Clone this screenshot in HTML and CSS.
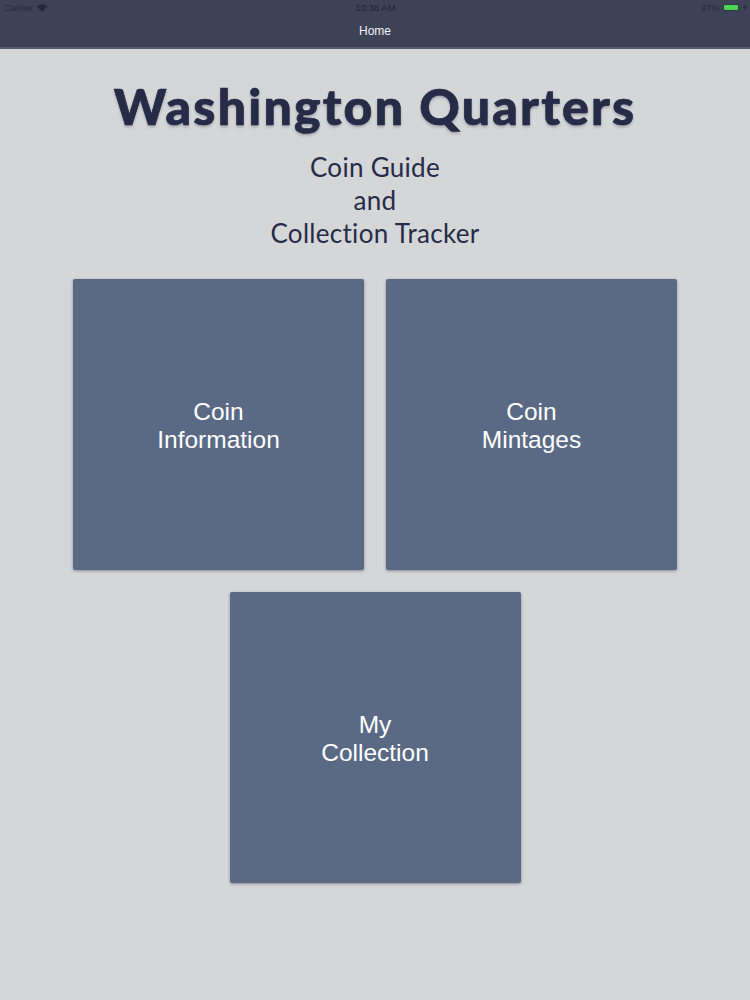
FILE: index.html
```html
<!DOCTYPE html>
<html lang="en">
<head>
    <meta charset="UTF-8">
    <meta name="viewport" content="width=device-width, initial-scale=1.0">
    <title>Washington Quarters</title>
    <link rel="stylesheet" href="styles.css">
</head>
<body>
    <header class="topbar">
        <div class="status">
            <div class="status-left">
                <span>Carrier</span>
                <svg class="wifi" width="10" height="8" viewBox="0 0 10 8"><path d="M5 8 L0 2.6 C3 -0.6 7 -0.6 10 2.6 Z" fill="#24283d"/></svg>
            </div>
            <div class="status-time">10:38 AM</div>
            <div class="status-right">
                <span>97%</span>
                <span class="battery"><span class="battery-fill"></span></span>
                <svg class="bolt" width="4" height="7" viewBox="0 0 4 7"><path d="M2.4 0 L0 4 H1.6 L1.2 7 L4 2.8 H2.3 Z" fill="#24283d"/></svg>
            </div>
        </div>
        <div class="nav-title">Home</div>
    </header>

    <main class="home">
        <h1 class="title">Washington Quarters</h1>
        <p class="subtitle">Coin Guide<br>and<br>Collection Tracker</p>
        <div class="tiles">
            <a class="tile">Coin<br>Information</a>
            <a class="tile">Coin<br>Mintages</a>
            <a class="tile">My<br>Collection</a>
        </div>
    </main>
</body>
</html>
```

FILE: styles.css
```css
* { box-sizing: border-box; }
html, body { height: 100%; }
body { margin: 0; background: #d5d6d8; font-family: "Liberation Sans", Arial, sans-serif; }

.topbar { height: 49px; background: #3e4257; border-bottom: 2px solid #555a75; }
.status { display: grid; grid-template-columns: 1fr auto 1fr; align-items: center; height: 15px; padding: 0 3px 0 4px; font-size: 9.5px; color: #24283d; }
.status-left { display: flex; align-items: center; gap: 4px; }
.status-time { color: #1f2336; }
.status-right { display: flex; align-items: center; justify-content: flex-end; gap: 3px; }
.battery { display: block; width: 16px; height: 7px; margin-right: 1px; padding: 1px; border-radius: 2px; background: #2f3d3a; }
.battery-fill { display: block; width: 100%; height: 100%; border-radius: 1px; background: #4fd45a; }
.nav-title { margin-top: 8px; text-align: center; font-size: 12px; line-height: 16px; color: #f2f3f6; }

.home { display: flex; flex-direction: column; align-items: center; }
.title { margin: 27px 0 0; font-family: "Lato", sans-serif; font-size: 50px; font-weight: 900; line-height: 60px; letter-spacing: 2.2px; color: #262b47; -webkit-text-stroke: 0.7px #262b47; text-shadow: 0 2px 3px rgba(30, 34, 60, 0.3); white-space: nowrap; }
.subtitle { margin: 15px 0 0; font-family: "Lato", sans-serif; font-size: 26px; line-height: 33px; letter-spacing: 0.3px; text-align: center; color: #262b47; }

.tiles { display: flex; flex-wrap: wrap; justify-content: center; gap: 22px; width: 604px; margin-top: 29px; }
.tile { display: flex; align-items: center; justify-content: center; width: 291px; height: 291px; padding-top: 3px; border-radius: 2px; background: #5a6a85; box-shadow: 0 1px 3px rgba(40, 45, 70, 0.45); font-size: 24.5px; line-height: 28px; text-align: center; color: #fff; }
```
